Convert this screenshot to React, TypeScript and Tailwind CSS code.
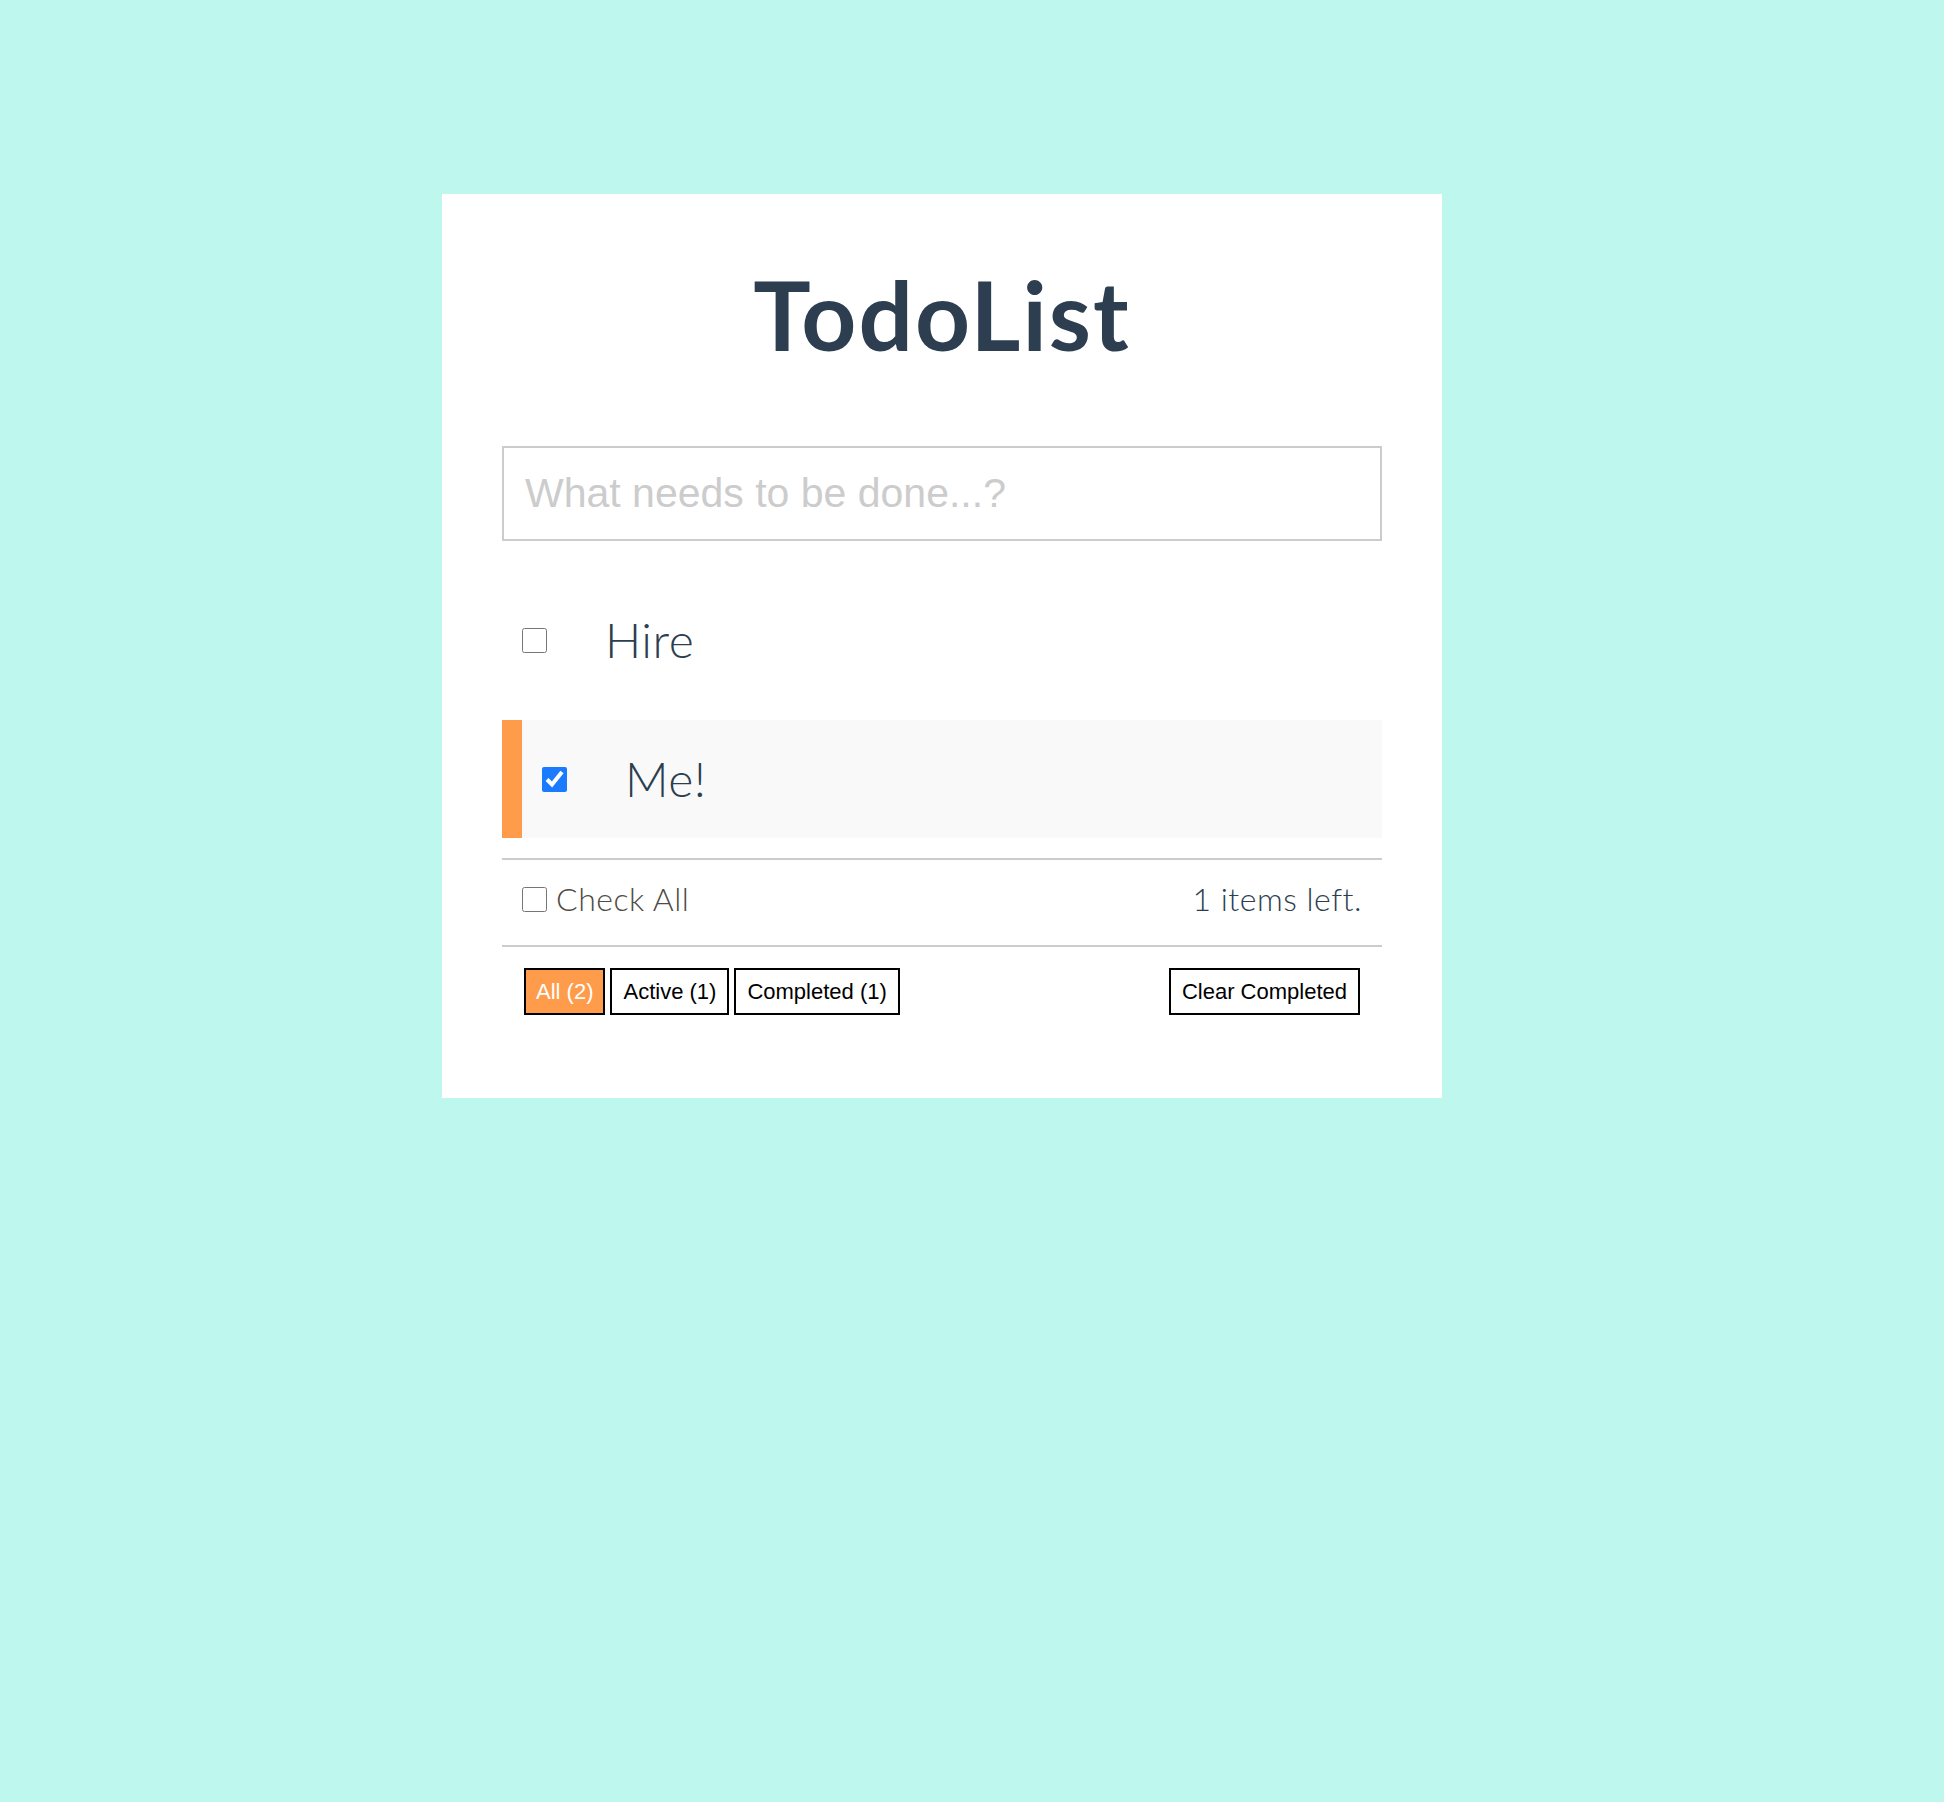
import { useState } from 'react';

type Todo = { id: number; text: string; done: boolean };

const avenir = { fontFamily: 'Lato, "Noto Sans", sans-serif' };

export default function App() {
    const [todos, setTodos] = useState<Todo[]>([
        { id: 1, text: 'Hire', done: false },
        { id: 2, text: 'Me!', done: true },
    ]);

    const toggle = (id: number) =>
        setTodos((list) => list.map((t) => (t.id === id ? { ...t, done: !t.done } : t)));

    const left = todos.filter((t) => !t.done).length;
    const completed = todos.length - left;

    return (
        <div className="min-h-screen bg-[#bdf7ed] pl-[442px] pt-[194px]">
            <div className="w-[1000px] bg-white px-[60px] pb-[83px] pt-[72px]">
                <h1
                    className="text-center text-[96px] font-bold leading-none tracking-[2px] text-[#2c3e50]"
                    style={avenir}
                >
                    TodoList
                </h1>

                <input
                    type="text"
                    placeholder="What needs to be done...?"
                    className="mt-[84px] box-border block h-[95px] w-full border-2 border-[#cccccc] px-[21px] text-[41px] text-[#2c3e50] outline-none placeholder:text-[#cccccc] font-['Liberation_Sans',Arial,sans-serif]"
                />

                {/* Todo items */}
                <ul className="mt-[40px] flex flex-col gap-[21px]">
                    {todos.map((todo) => (
                        <li
                            key={todo.id}
                            className={
                                todo.done
                                    ? 'flex h-[118px] items-center border-l-[20px] border-[#fe9c4b] bg-[#f9f9f9] pl-[20px]'
                                    : 'flex h-[118px] items-center pl-[20px]'
                            }
                        >
                            <input
                                type="checkbox"
                                checked={todo.done}
                                onChange={() => toggle(todo.id)}
                                className="m-0 h-[25px] w-[25px] accent-[#1a7bff]"
                            />
                            <span
                                className="ml-[58px] text-[48px] font-light leading-none tracking-[0.5px] text-[#2c3e50]"
                                style={avenir}
                            >
                                {todo.text}
                            </span>
                        </li>
                    ))}
                </ul>

                {/* Check all / counter */}
                <div
                    className="mt-[20px] flex h-[89px] items-center justify-between border-y-2 border-[#cccccc] px-[20px] pb-[7px]"
                    style={avenir}
                >
                    <label className="flex items-center text-[32px] font-light tracking-[0.5px] text-[#4f4a44]">
                        <input type="checkbox" className="m-0 h-[25px] w-[25px]" />
                        <span className="ml-[9px]">Check All</span>
                    </label>
                    <span className="text-[32px] font-light tracking-[0.5px] text-[#2c3e50]">
                        {left} items left.
                    </span>
                </div>

                {/* Filters */}
                <div className="flex items-center justify-between px-[22px] pt-[21px] font-['Liberation_Sans',Arial,sans-serif] text-[22px]">
                    <div className="flex gap-[5px]">
                        <button className="h-[47px] border-2 border-black bg-[#fe9c4b] px-[10px] text-white">
                            All ({todos.length})
                        </button>
                        <button className="h-[47px] border-2 border-black bg-white px-[11px] text-black">
                            Active ({left})
                        </button>
                        <button className="h-[47px] border-2 border-black bg-white px-[11px] text-black">
                            Completed ({completed})
                        </button>
                    </div>
                    <button className="h-[47px] border-2 border-black bg-white px-[11px] text-black">
                        Clear Completed
                    </button>
                </div>
            </div>
        </div>
    );
}
